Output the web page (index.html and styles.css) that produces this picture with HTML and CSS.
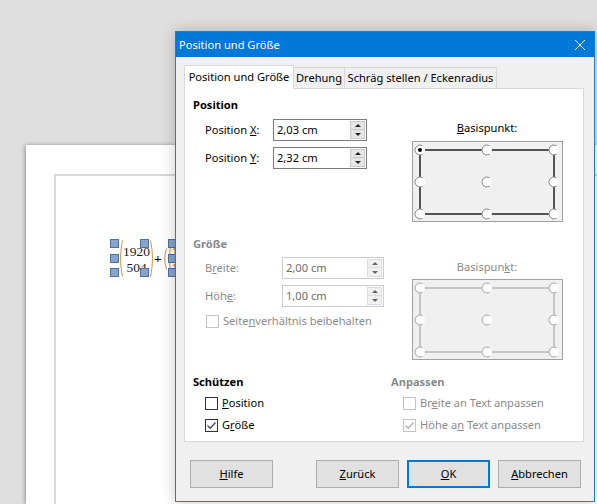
FILE: index.html
```html
<!DOCTYPE html>
<html lang="de">
<head>
    <meta charset="UTF-8">
    <title>Position und Größe</title>
    <link rel="stylesheet" href="styles.css">
</head>
<body>
    <!-- document page behind the dialog -->
    <div class="sheet">
        <div class="margin-frame"></div>
        <div class="formula">
            <div class="formula-body">
                <svg class="paren" width="4" height="37" viewBox="0 0 4 37"><path d="M3.5 0.5 Q-0.5 18.5 3.5 36.5" /></svg>
                <div class="matrix">
                    <span>1920</span>
                    <span>504</span>
                </div>
                <svg class="paren" width="4" height="37" viewBox="0 0 4 37"><path d="M0.5 0.5 Q4.5 18.5 0.5 36.5" /></svg>
                <span class="plus">+</span>
                <svg class="paren small" width="4" height="22" viewBox="0 0 4 22"><path d="M3.5 0.5 Q0 11 3.5 21.5" /></svg>
                <svg class="paren" width="4" height="37" viewBox="0 0 4 37"><path d="M3.5 0.5 Q-0.5 18.5 3.5 36.5" /></svg>
                <div class="matrix"><span>1</span><span>1</span></div>
            </div>
            <span class="handle h-tl"></span>
            <span class="handle h-ml"></span>
            <span class="handle h-bl"></span>
            <span class="handle h-tc"></span>
            <span class="handle h-bc"></span>
            <span class="handle h-tr"></span>
            <span class="handle h-mr"></span>
            <span class="handle h-br"></span>
        </div>
    </div>

    <!-- dialog window -->
    <div class="dialog">
        <div class="titlebar">
            <span>Position und Größe</span>
            <svg class="close" width="10" height="10" viewBox="0 0 10 10"><path d="M0 0 L10 10 M10 0 L0 10" /></svg>
        </div>

        <div class="tabs">
            <div class="tab active">Position und Größe</div>
            <div class="tab tab-rotate">Drehung</div>
            <div class="tab tab-slant">Schräg stellen / Eckenradius</div>
        </div>

        <div class="panel">
            <!---------- POSITION ---------->
            <section class="group">
                <div class="col">
                    <div class="heading">Position</div>
                    <div class="field-row">
                        <span class="field-label lbl-pos">Position <u>X</u>:</span>
                        <div class="spinfield w-pos"><span>2,03 cm</span><div class="spin"><span class="up"></span><span class="down"></span></div></div>
                    </div>
                    <div class="field-row">
                        <span class="field-label lbl-pos">Position <u>Y</u>:</span>
                        <div class="spinfield w-pos"><span>2,32 cm</span><div class="spin"><span class="up"></span><span class="down"></span></div></div>
                    </div>
                </div>
                <div class="col col-right">
                    <div class="point-label"><u>B</u>asispunkt:</div>
                    <div class="pointbox">
                        <svg width="149" height="79" viewBox="0 0 149 79">
                            <rect class="frame" x="7" y="8" width="134" height="64" />
                            <g class="pts">
                                <circle cx="7" cy="8" r="5" /><circle cx="74" cy="8" r="5" /><circle cx="141" cy="8" r="5" />
                                <circle cx="7" cy="40" r="5" /><circle cx="74" cy="40" r="5" /><circle cx="141" cy="40" r="5" />
                                <circle cx="7" cy="72" r="5" /><circle cx="74" cy="72" r="5" /><circle cx="141" cy="72" r="5" />
                            </g>
                            <g class="rings">
                                <path d="M9.5 3.7 A5 5 0 1 0 9.5 12.3" /><path d="M76.5 3.7 A5 5 0 1 0 76.5 12.3" /><path d="M143.5 3.7 A5 5 0 1 0 143.5 12.3" />
                                <path d="M9.5 35.7 A5 5 0 1 0 9.5 44.3" /><path d="M76.5 35.7 A5 5 0 1 0 76.5 44.3" /><path d="M143.5 35.7 A5 5 0 1 0 143.5 44.3" />
                                <path d="M9.5 67.7 A5 5 0 1 0 9.5 76.3" /><path d="M76.5 67.7 A5 5 0 1 0 76.5 76.3" /><path d="M143.5 67.7 A5 5 0 1 0 143.5 76.3" />
                            </g>
                            <circle class="dot" cx="7" cy="8" r="2" />
                        </svg>
                    </div>
                </div>
            </section>

            <!---------- GROESSE ---------->
            <section class="group disabled">
                <div class="col">
                    <div class="heading">Größe</div>
                    <div class="field-row first">
                        <span class="field-label lbl-size">B<u>r</u>eite:</span>
                        <div class="spinfield w-size"><span>2,00 cm</span><div class="spin"><span class="up"></span><span class="down"></span></div></div>
                    </div>
                    <div class="field-row">
                        <span class="field-label lbl-size">Höh<u>e</u>:</span>
                        <div class="spinfield w-size"><span>1,00 cm</span><div class="spin"><span class="up"></span><span class="down"></span></div></div>
                    </div>
                    <div class="check-row keep">
                        <span class="check"></span>
                        <span>Seite<u>n</u>verhältnis beibehalten</span>
                    </div>
                </div>
                <div class="col col-right">
                    <div class="point-label">Basispun<u>k</u>t:</div>
                    <div class="pointbox">
                        <svg width="149" height="79" viewBox="0 0 149 79">
                            <rect class="frame" x="7" y="8" width="134" height="64" />
                            <g class="pts">
                                <circle cx="7" cy="8" r="5" /><circle cx="74" cy="8" r="5" /><circle cx="141" cy="8" r="5" />
                                <circle cx="7" cy="40" r="5" /><circle cx="74" cy="40" r="5" /><circle cx="141" cy="40" r="5" />
                                <circle cx="7" cy="72" r="5" /><circle cx="74" cy="72" r="5" /><circle cx="141" cy="72" r="5" />
                            </g>
                            <g class="rings">
                                <path d="M9.5 3.7 A5 5 0 1 0 9.5 12.3" /><path d="M76.5 3.7 A5 5 0 1 0 76.5 12.3" /><path d="M143.5 3.7 A5 5 0 1 0 143.5 12.3" />
                                <path d="M9.5 35.7 A5 5 0 1 0 9.5 44.3" /><path d="M76.5 35.7 A5 5 0 1 0 76.5 44.3" /><path d="M143.5 35.7 A5 5 0 1 0 143.5 44.3" />
                                <path d="M9.5 67.7 A5 5 0 1 0 9.5 76.3" /><path d="M76.5 67.7 A5 5 0 1 0 76.5 76.3" /><path d="M143.5 67.7 A5 5 0 1 0 143.5 76.3" />
                            </g>
                        </svg>
                    </div>
                </div>
            </section>

            <!---------- SCHUETZEN / ANPASSEN ---------->
            <section class="group">
                <div class="col">
                    <div class="heading">Schützen</div>
                    <div class="check-row first">
                        <span class="check"></span>
                        <span><u>P</u>osition</span>
                    </div>
                    <div class="check-row">
                        <span class="check"><svg width="11" height="11" viewBox="0 0 11 11"><path d="M1.5 5.5 L4.2 8.2 L9.5 2.5" /></svg></span>
                        <span>G<u>r</u>öße</span>
                    </div>
                </div>
                <div class="col disabled">
                    <div class="heading">Anpassen</div>
                    <div class="check-row first">
                        <span class="check"></span>
                        <span>Br<u>e</u>ite an Text anpassen</span>
                    </div>
                    <div class="check-row">
                        <span class="check"><svg width="11" height="11" viewBox="0 0 11 11"><path d="M1.5 5.5 L4.2 8.2 L9.5 2.5" /></svg></span>
                        <span>Höhe a<u>n</u> Text anpassen</span>
                    </div>
                </div>
            </section>
        </div>

        <div class="buttons">
            <button class="btn"><u>H</u>ilfe</button>
            <span class="spacer"></span>
            <button class="btn"><u>Z</u>urück</button>
            <button class="btn default"><u>O</u>K</button>
            <button class="btn"><u>A</u>bbrechen</button>
        </div>
    </div>
</body>
</html>
```

FILE: styles.css
```css
body {
    margin: 0;
    width: 597px;
    height: 504px;
    overflow: hidden;
    position: relative;
    background-color: #dfdfdf;
    font-family: "Noto Sans", "DejaVu Sans", sans-serif;
    font-size: 11.1px;
    line-height: 16px;
    color: #000;
}
u {
    text-underline-offset: 1px;
}

/* ---------- document page ---------- */
.sheet {
    position: relative;
    box-sizing: border-box;
    width: 571px;
    height: 359px;
    margin: 145px 0 0 26px;
    padding: 29px 0 0 28px;
    background: #fff;
    box-shadow: -1px 0 4px rgba(0, 0, 0, 0.35);
}
.margin-frame {
    height: 100%;
    border-top: 2px solid #d9d9d9;
    border-left: 2px solid #d9d9d9;
}
.formula {
    position: absolute;
    left: 84px;
    top: 94px;
    width: 70px;
    height: 40px;
}
.formula-body {
    position: absolute;
    left: 9px;
    top: 1px;
    display: flex;
    align-items: center;
    font-family: "Liberation Serif", serif;
    font-size: 13.5px;
    color: #1a1a1a;
}
.paren path {
    fill: none;
    stroke: #c9963f;
    stroke-width: 1;
}
.paren.small {
    margin-left: 1px;
    margin-right: 1px;
}
.matrix {
    display: flex;
    flex-direction: column;
    align-items: center;
    line-height: 16px;
    padding-top: 2px;
}
.plus {
    font-weight: bold;
    color: #000;
}
.handle {
    position: absolute;
    width: 7px;
    height: 7px;
    background: #87a4cb;
    border: 1px solid #4f719e;
}
.h-tl { left: 0; top: 0; }
.h-ml { left: 0; top: 15px; }
.h-bl { left: 0; top: 29px; }
.h-tc { left: 30px; top: 0; }
.h-bc { left: 30px; top: 29px; }
.h-tr { left: 58px; top: 0; }
.h-mr { left: 58px; top: 15px; }
.h-br { left: 58px; top: 29px; }

/* ---------- dialog ---------- */
.dialog {
    position: absolute;
    left: 175px;
    top: 31px;
    width: 420px;
    height: 471px;
    box-sizing: border-box;
    border: 1px solid #1a7fd4;
    background: #f0f0f0;
    box-shadow: 0 0 14px rgba(0, 0, 0, 0.22);
}
.titlebar {
    height: 25px;
    display: flex;
    align-items: center;
    justify-content: space-between;
    padding: 0 9px 0 3px;
    background: #0078d7;
    color: #fff;
}
.close path {
    stroke: #fff;
    stroke-width: 1;
}

.tabs {
    display: flex;
    align-items: flex-end;
    height: 23px;
    margin: 8px 0 0 8px;
}
.tab {
    box-sizing: border-box;
    height: 21px;
    display: flex;
    align-items: center;
    justify-content: center;
    border: 1px solid #d9d9d9;
    border-bottom: none;
    background: #f0f0f0;
}
.tab + .tab {
    border-left: none;
}
.tab.active {
    position: relative;
    z-index: 1;
    width: 110px;
    height: 24px;
    margin-bottom: -1px;
    padding-bottom: 2px;
    background: #fff;
}
.tab-rotate {
    width: 51px;
}
.tab-slant {
    width: 152px;
}

.panel {
    box-sizing: border-box;
    width: 400px;
    height: 354px;
    margin-left: 8px;
    padding: 8px 0 0 8px;
    border: 1px solid #d9d9d9;
    background: #fff;
}
.group {
    display: grid;
    grid-template-columns: 198px 192px;
}
.group + .group {
    margin-top: 14px;
}
.heading {
    font-weight: bold;
}
.disabled .heading,
.disabled .field-label,
.disabled .point-label,
.disabled .check-row {
    color: #8a8a8a;
}

.field-row {
    display: flex;
    align-items: center;
    padding-left: 12px;
    margin-top: 6px;
}
.field-label {
    flex: none;
}
.lbl-pos {
    width: 68px;
}
.lbl-size {
    width: 77px;
}
.spinfield {
    box-sizing: border-box;
    height: 22px;
    display: flex;
    align-items: center;
    justify-content: space-between;
    padding: 0 1px 0 3px;
    border: 1px solid #7a7a7a;
    background: #fff;
}
.w-pos {
    width: 94px;
}
.w-size {
    width: 102px;
}
.spin {
    display: flex;
    flex-direction: column;
    width: 15px;
}
.spin span {
    box-sizing: border-box;
    height: 9px;
    display: flex;
    align-items: center;
    justify-content: center;
    background: #e6e6e6;
    border: 1px solid #c8c8c8;
}
.spin span + span {
    border-top: none;
    height: 9px;
}
.spin .up::before {
    content: "";
    border-left: 3px solid transparent;
    border-right: 3px solid transparent;
    border-bottom: 3px solid #222;
}
.spin .down::before {
    content: "";
    border-left: 3px solid transparent;
    border-right: 3px solid transparent;
    border-top: 3px solid #222;
}
.disabled .spinfield {
    border-color: #cccccc;
    color: #6d6d6d;
}
.disabled .spin span {
    background: #f0f0f0;
    border-color: #dcdcdc;
}
.disabled .spin .up::before {
    border-bottom-color: #666;
}
.disabled .spin .down::before {
    border-top-color: #666;
}
.field-row.first,
.check-row.first {
    margin-top: 5px;
}

.col-right {
    padding-top: 23px;
}
.point-label {
    text-align: center;
}
.pointbox {
    box-sizing: border-box;
    width: 151px;
    height: 81px;
    margin: 5px 0 0 21px;
    border: 1px solid #a0a0a0;
    background: #f0f0f0;
}
.disabled .pointbox {
    margin-top: 4px;
}
.pointbox svg {
    display: block;
}
.pointbox .frame {
    fill: none;
    stroke: #000;
    stroke-width: 1.3;
}
.disabled .pointbox .frame {
    stroke: #9a9a9a;
    stroke-width: 1;
}
.pts circle {
    fill: #fff;
}
.rings path {
    fill: none;
    stroke: #8c8c8c;
    stroke-width: 1;
}
.disabled .rings path {
    stroke: #a8a8a8;
}
.dot {
    fill: #000;
}

.check-row {
    display: flex;
    align-items: center;
    gap: 4px;
    padding-left: 12px;
    margin-top: 6px;
}
.check-row.keep {
    padding-left: 13px;
}
.check {
    box-sizing: border-box;
    width: 13px;
    height: 13px;
    flex: none;
    border: 1px solid #333;
    background: #fff;
}
.check svg {
    display: block;
}
.check path {
    fill: none;
    stroke: #4a4a4a;
    stroke-width: 1.3;
}
.disabled .check {
    border-color: #c4c4c4;
}
.disabled .check path {
    stroke: #b0b0b0;
}

/* ---------- buttons ---------- */
.buttons {
    display: flex;
    gap: 8px;
    margin-top: 18px;
    padding: 0 13px 0 14px;
}
.spacer {
    flex: 1;
}
.btn {
    box-sizing: border-box;
    width: 83px;
    height: 28px;
    padding: 0;
    border: 1px solid #adadad;
    background: #e1e1e1;
    font: inherit;
    color: #000;
}
.btn.default {
    border: 2px solid #0078d7;
}
```
